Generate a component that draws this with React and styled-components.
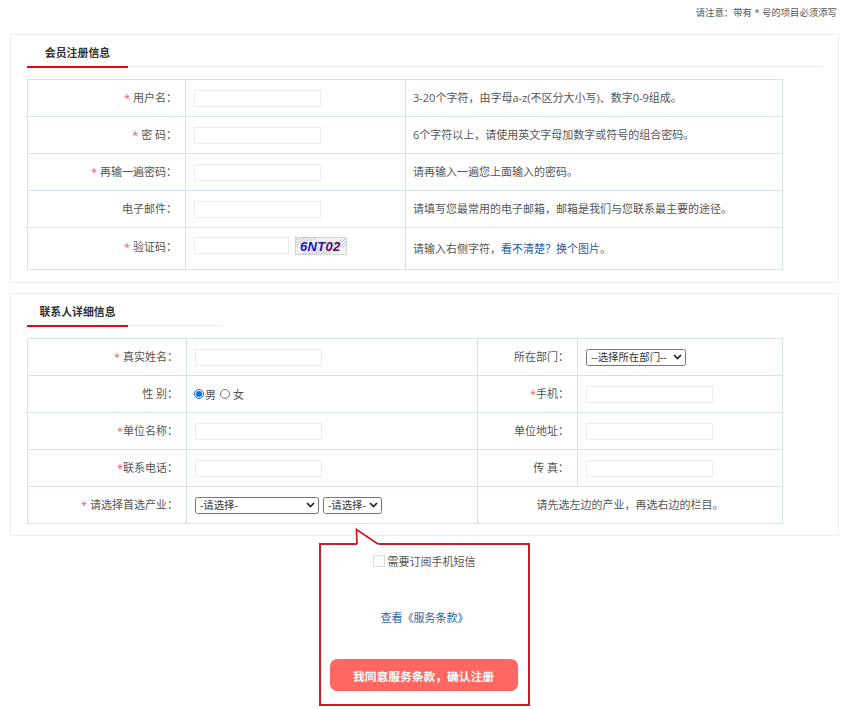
import React from 'react'
import styled, { createGlobalStyle } from 'styled-components'

const GlobalStyle = createGlobalStyle`
  html, body {
    margin: 0;
    padding: 0;
    background: #fff;
  }
  body {
    font-family: "Open Sans", "Noto Sans CJK SC", sans-serif;
    font-size: 11px;
    color: #555;
  }
`

const Page = styled.div`
  width: 858px;
  height: 709px;
  overflow: hidden;
  padding: 0 19px 0 10px;
  box-sizing: border-box;
`

const Notice = styled.div`
  height: 34px;
  box-sizing: border-box;
  padding: 5px 2px 0 0;
  text-align: right;
  font-size: 9.4px;
  line-height: 15px;
  color: #555;
`

const Panel = styled.section`
  border: 1px solid #eeeeee;
  box-sizing: border-box;
  height: ${({ $height }) => $height}px;
  margin-bottom: 10px;
  padding: 0 16px;
`

const TitleBar = styled.div`
  width: ${({ $width }) => $width}px;
  height: 32px;
  box-sizing: border-box;
  border-bottom: 1px solid #eeeeee;
  margin-bottom: 12px;
`

const Title = styled.h2`
  width: 101px;
  height: 33px;
  box-sizing: border-box;
  margin: 0;
  border-bottom: 2px solid #e2090f;
  font-size: 10.9px;
  font-weight: 700;
  line-height: 35px;
  color: #333;
  text-align: center;
`

const Table = styled.table`
  border-collapse: collapse;
  table-layout: fixed;
  width: 755px;
`

const Row = styled.tr`
  height: ${({ $height }) => $height || 37}px;
`

const Cell = styled.td`
  border: 1px solid #d6e3ea;
  box-sizing: border-box;
  padding: 0 0 2px;
  color: #555;
  white-space: nowrap;
`

const LabelCell = styled(Cell)`
  text-align: right;
  padding-right: 8px;
  padding-bottom: ${({ $raised }) => ($raised ? 6 : 2)}px;
`

const FieldCell = styled(Cell)`
  padding-left: 8px;
  padding-bottom: ${({ $raised }) => ($raised ? 6 : 0)}px;
`

const HintCell = styled(Cell)`
  padding-left: 7px;
`

const CenterCell = styled(Cell)`
  text-align: center;
`

const Star = styled.span`
  color: #f55a5a;
`

const TextInput = styled.input`
  display: block;
  width: ${({ $width }) => $width || 127}px;
  height: 17px;
  box-sizing: border-box;
  border: 1px solid #ececec;
  background: #fff;
  margin: 0;
  padding: 0 4px;
  outline: none;
`

const CaptchaWrap = styled.div`
  display: flex;
  align-items: center;
  gap: 6px;
`

const Choice = styled.div`
  display: flex;
  align-items: center;
  margin-left: -1px;
`

const Radio = styled.input`
  width: 10px;
  height: 10px;
  margin: 0 1px 0 0;
  accent-color: #0a6cf0;
`

const RadioSecond = styled(Radio)`
  margin-left: 4px;
  margin-right: 3px;
`

const chevron =
  "data:image/svg+xml,%3Csvg xmlns='http://www.w3.org/2000/svg' width='9' height='6'%3E%3Cpath d='M1 1l3.5 3.5L8 1' fill='none' stroke='%23222' stroke-width='1.7'/%3E%3C/svg%3E"

const Select = styled.select`
  display: block;
  appearance: none;
  width: ${({ $width }) => $width}px;
  height: 17px;
  box-sizing: border-box;
  border: 1px solid #767676;
  border-radius: 2.5px;
  background: #fff url("${chevron}") no-repeat right 3px center;
  font-family: inherit;
  font-size: 10.4px;
  color: #333;
  padding: 0 0 0 4px;
  margin: 0;
`

const SelectRow = styled.div`
  display: flex;
  gap: 4px;
`

const Link = styled.a`
  color: #1f5aa6;
  text-decoration: none;
`

const Callout = styled.div`
  position: relative;
  width: 211px;
  height: 163px;
  box-sizing: border-box;
  margin: -3px 0 0 309px;
  border: 2px solid #c81e26;
  display: flex;
  flex-direction: column;
  align-items: center;
  padding: 9px 9px 0;
`

const Tail = styled.svg`
  position: absolute;
  left: 33px;
  top: -17px;
  width: 28px;
  height: 19px;
`

const Subscribe = styled.label`
  display: flex;
  align-items: center;
  gap: 3px;
  height: 14px;
`

const Box = styled.input`
  appearance: none;
  width: 12px;
  height: 12px;
  margin: 0 0 0 -1px;
  border: 1px solid #dddddd;
  background: #fff;
`

const TermsLink = styled(Link)`
  margin-top: 42px;
  line-height: 16px;
  color: #2d62a8;
`

const Submit = styled.button`
  width: 188px;
  height: 32px;
  margin: 33px 2px 0 0;
  border: 0;
  border-radius: 7px;
  background: #ff6762;
  color: #fff;
  font-family: inherit;
  font-size: 11.75px;
  font-weight: 700;
  padding: 0;
`

// noise dots for the captcha picture
const captchaDots = Array.from({ length: 150 }, (_, i) => ({
  x: (i * 37) % 51,
  y: (i * 23) % 18,
  c: ['#c9b6d8', '#b9d3b0', '#e4c0a8', '#a8bfe0', '#d0d0d0'][i % 5],
}))

const Captcha = () => (
  <svg width="52" height="18" viewBox="0 0 52 18">
    <rect width="52" height="18" fill="#f2f1f4" />
    {captchaDots.map((d, i) => (
      <rect key={i} x={d.x} y={d.y} width="1" height="1" fill={d.c} />
    ))}
    <rect x="0.5" y="0.5" width="51" height="17" fill="none" stroke="#b9b9c4" strokeDasharray="1 1" />
    <text x="5" y="13.5" fontFamily="Liberation Sans" fontWeight="700" fontStyle="italic" fontSize="13" letterSpacing="0.3">
      <tspan fill="#1414d8">6N</tspan>
      <tspan fill="#2a1a8a">T</tspan>
      <tspan fill="#5a0a6a">02</tspan>
    </text>
  </svg>
)

const accountRows = [
  { label: '用户名：', star: '* ', hint: '3-20个字符，由字母a-z(不区分大小写)、数字0-9组成。' },
  { label: '密 码：', star: '* ', hint: '6个字符以上，请使用英文字母加数字或符号的组合密码。' },
  { label: '再输一遍密码：', star: '* ', hint: '请再输入一遍您上面输入的密码。' },
  { label: '电子邮件：', hint: '请填写您最常用的电子邮箱，邮箱是我们与您联系最主要的途径。' },
]

const App = () => (
  <Page>
    <GlobalStyle />
    <Notice>请注意：带有 * 号的项目必须添写</Notice>

    <Panel $height={249}>
      <TitleBar $width={796}>
        <Title>会员注册信息</Title>
      </TitleBar>
      <Table>
        <colgroup>
          <col width="158" />
          <col width="220" />
          <col width="377" />
        </colgroup>
        <tbody>
          {accountRows.map((row) => (
            <Row key={row.label}>
              <LabelCell>
                {row.star && <Star>{row.star}</Star>}
                {row.label}
              </LabelCell>
              <FieldCell><TextInput /></FieldCell>
              <HintCell>{row.hint}</HintCell>
            </Row>
          ))}
          <Row $height={42}>
            <LabelCell $raised><Star>* </Star>验证码：</LabelCell>
            <FieldCell $raised>
              <CaptchaWrap>
                <TextInput $width={95} />
                <Captcha />
              </CaptchaWrap>
            </FieldCell>
            <HintCell>
              请输入右侧字符，<Link href="#">看不清楚？换个图片</Link>。
            </HintCell>
          </Row>
        </tbody>
      </Table>
    </Panel>

    <Panel $height={243}>
      <TitleBar $width={195}>
        <Title>联系人详细信息</Title>
      </TitleBar>
      <Table>
        <colgroup>
          <col width="159" />
          <col width="291" />
          <col width="100" />
          <col width="205" />
        </colgroup>
        <tbody>
          <Row>
            <LabelCell><Star>* </Star>真实姓名：</LabelCell>
            <FieldCell><TextInput /></FieldCell>
            <LabelCell>所在部门：</LabelCell>
            <FieldCell>
              <Select $width={100}>
                <option>--选择所在部门--</option>
              </Select>
            </FieldCell>
          </Row>
          <Row>
            <LabelCell>性 别：</LabelCell>
            <FieldCell>
              <Choice>
                <Radio type="radio" name="sex" defaultChecked />男
                <RadioSecond type="radio" name="sex" />女
              </Choice>
            </FieldCell>
            <LabelCell><Star>*</Star>手机：</LabelCell>
            <FieldCell><TextInput /></FieldCell>
          </Row>
          <Row>
            <LabelCell><Star>*</Star>单位名称：</LabelCell>
            <FieldCell><TextInput /></FieldCell>
            <LabelCell>单位地址：</LabelCell>
            <FieldCell><TextInput /></FieldCell>
          </Row>
          <Row>
            <LabelCell><Star>*</Star>联系电话：</LabelCell>
            <FieldCell><TextInput /></FieldCell>
            <LabelCell>传 真：</LabelCell>
            <FieldCell><TextInput /></FieldCell>
          </Row>
          <Row>
            <LabelCell><Star>* </Star>请选择首选产业：</LabelCell>
            <FieldCell>
              <SelectRow>
                <Select $width={124}>
                  <option>-请选择-</option>
                </Select>
                <Select $width={59}>
                  <option>-请选择-</option>
                </Select>
              </SelectRow>
            </FieldCell>
            <CenterCell colSpan={2}>请先选左边的产业，再选右边的栏目。</CenterCell>
          </Row>
        </tbody>
      </Table>
    </Panel>

    <Callout>
      <Tail viewBox="0 0 28 19">
        <path d="M3 17 L2.5 1 L25 17 Z" fill="#fff" />
        <rect x="3" y="14" width="20" height="4" fill="#fff" />
        <path d="M3 16 L2.5 1.5 L24 16" fill="none" stroke="#c81e26" strokeWidth="1.8" />
      </Tail>
      <Subscribe>
        <Box type="checkbox" />
        需要订阅手机短信
      </Subscribe>
      <TermsLink href="#">查看《服务条款》</TermsLink>
      <Submit type="button">我同意服务条款，确认注册</Submit>
    </Callout>
  </Page>
)

export default App
